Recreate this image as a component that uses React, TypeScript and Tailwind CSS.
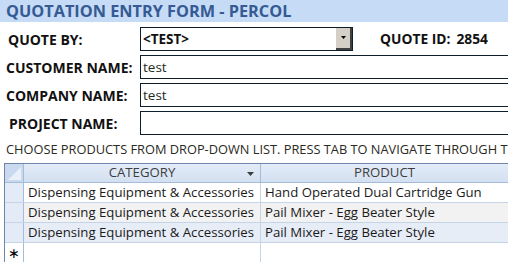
import React from "react";

const font = { fontFamily: '"Open Sans", "Noto Sans", sans-serif' };

function Field({ label, value, labelClass }: { label: string; value?: string; labelClass?: string }) {
  return (
    <div className="flex h-[24px] items-center">
      <div className={`w-[140px] shrink-0 whitespace-nowrap text-[14px] font-bold text-[#111] ${labelClass ?? "pl-[6px]"}`}>{label}</div>
      <div className="h-[24px] w-[400px] shrink-0 border border-[#0e1e2c] bg-white pl-[2px] text-[13.5px] leading-[22px] text-[#1d2b1d]">
        {value}
      </div>
    </div>
  );
}

const rows = [
  { cat: "Dispensing Equipment & Accessories", prod: "Hand Operated Dual Cartridge Gun", bg: "bg-white" },
  { cat: "Dispensing Equipment & Accessories", prod: "Pail Mixer - Egg Beater Style", bg: "bg-[#f2f2f2]" },
  { cat: "Dispensing Equipment & Accessories", prod: "Pail Mixer - Egg Beater Style", bg: "bg-[#e7edf7]" },
];

export default function App() {
  return (
    <div className="relative h-[262px] w-[508px] overflow-hidden bg-white" style={font}>
      <div className="flex h-[22px] items-center whitespace-nowrap bg-[#c5dbf6] pl-[6px] text-[16.3px] font-bold text-[#365a93]">
        QUOTATION ENTRY FORM - PERCOL
      </div>
      <div className="mt-[5px] flex flex-col gap-[4px]">
        <div className="flex h-[24px] items-center">
          <div className="w-[140px] shrink-0 pl-[8px] text-[14px] font-bold text-[#111]">QUOTE BY:</div>
          <div className="flex h-[24px] w-[213px] shrink-0 items-stretch border border-[#0e1e2c] bg-white">
            <div className="flex-1 pl-[2px] text-[13.5px] font-bold leading-[22px] text-[#111]">&lt;TEST&gt;</div>
            <div className="flex w-[16px] items-center justify-center border-b-2 border-r-2 border-[#404040] bg-[#d4d0c8]">
              <svg width="7" height="4" viewBox="0 0 7 4">
                <path d="M1 0h5L3.5 3z" fill="#000" />
              </svg>
            </div>
          </div>
          <div className="ml-[27px] whitespace-nowrap text-[13.8px] font-bold text-[#111]">
            QUOTE ID:<span className="ml-[6px]">2854</span>
          </div>
        </div>
        <Field label="CUSTOMER NAME:" value="test" />
        <Field label="COMPANY NAME:" value="test" />
        <Field label="PROJECT NAME:" labelClass="pl-[9px]" />
      </div>
      <div className="mt-[5px] w-[508px] overflow-hidden whitespace-nowrap pl-[6px] text-[12.8px] leading-[18px] text-[#2a2a22]">
        CHOOSE PRODUCTS FROM DROP-DOWN LIST. PRESS TAB TO NAVIGATE THROUGH THE FIELDS
      </div>
      <div className="ml-[4px] mt-[5px] w-[520px] border-l border-t border-[#6f86a8] text-[13.2px]">
        <div className="flex h-[19px] border-b border-[#a6bbd7] bg-gradient-to-b from-[#e3ecf8] to-[#d3e0f1] text-[#3d3d3d]">
          <div className="relative w-[19px] shrink-0 border-r border-[#a6bbd7] bg-[#c9daf0]">
            <svg className="absolute bottom-[2px] right-[2px]" width="13" height="13" viewBox="0 0 13 13">
              <path d="M13 0V13H0z" fill="#e9f0fa" />
            </svg>
          </div>
          <div className="relative flex w-[237px] shrink-0 items-center justify-center border-r border-[#a6bbd7]">
            CATEGORY
            <svg className="absolute right-[6px] top-[8px]" width="7" height="4" viewBox="0 0 7 4">
              <path d="M0 0h7L3.5 4z" fill="#3d3d3d" />
            </svg>
          </div>
          <div className="flex w-[247px] shrink-0 items-center justify-center">PRODUCT</div>
        </div>
        {rows.map((r, i) => (
          <div key={i} className={`flex h-[20px] border-b border-[#c6d4e8] ${r.bg}`}>
            <div className="w-[19px] shrink-0 border-r border-[#a6bbd7] bg-[#e3ebf6]" />
            <div className="flex w-[237px] shrink-0 items-center whitespace-nowrap border-r border-[#c6d4e8] pl-[4px] text-[#1a1a1a]">
              {r.cat}
            </div>
            <div className="flex w-[247px] shrink-0 items-center whitespace-nowrap pl-[4px] text-[#1a1a1a]">{r.prod}</div>
          </div>
        ))}
        <div className="flex h-[20px] bg-white">
          <div className="flex w-[19px] shrink-0 items-center justify-center border-r border-[#a6bbd7] bg-white text-[14px] font-light leading-none text-black">
            ∗
          </div>
          <div className="w-[237px] shrink-0 border-r border-[#c6d4e8]" />
          <div className="w-[247px] shrink-0" />
        </div>
      </div>
    </div>
  );
}
